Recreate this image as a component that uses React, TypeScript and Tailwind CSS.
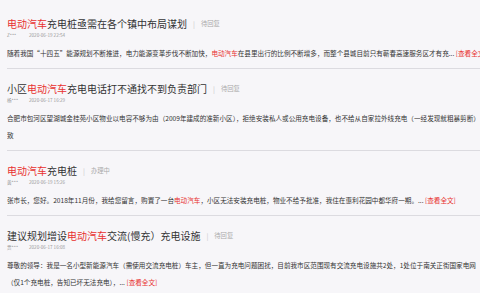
const red = 'text-[#e8312f]'

type Item = {
  pre?: string
  post: string
  status: string
  user: string
  time: string
  lines: React.ReactNode[]
}

const items: Item[] = [
  {
    post: '充电桩亟需在各个镇中布局谋划',
    status: '待回复',
    user: 'Z***',
    time: '2020-06-19 22:54',
    lines: [
      <>
        随着我国“十四五”能源规划不断推进，电力能源变革步伐不断加快，<span className={red}>电动汽车</span>
        在县里出行的比例不断增多，而整个县城目前只有蕲春高速服务区才有充... <span className={red}>[查看全文]</span>
      </>,
    ],
  },
  {
    pre: '小区',
    post: '充电电话打不通找不到负责部门',
    status: '待回复',
    user: '杨***',
    time: '2020-06-17 16:29',
    lines: [
      '合肥市包河区望湖城金桂苑小区物业以电容不够为由（2009年建成的准新小区），拒绝安装私人或公用充电设备，也不给从自家拉外线充电（一经发现就粗暴剪断）',
      '致',
    ],
  },
  {
    post: '充电桩',
    status: '办理中',
    user: '黄***',
    time: '2020-06-19 15:26',
    lines: [
      <>
        张市长，您好。2018年11月份，我给您留言，购置了一台<span className={red}>电动汽车</span>
        ，小区无法安装充电桩，物业不给予批准，我住在惠利花园中都华府一期。... <span className={red}>[查看全文]</span>
      </>,
    ],
  },
  {
    pre: '建议规划增设',
    post: '交流(慢充）充电设施',
    status: '待回复',
    user: '贾***',
    time: '2020-06-17 16:08',
    lines: [
      '尊敬的领导：我是一名小型新能源汽车（需使用交流充电桩）车主，但一直为充电问题困扰，目前我市区范围现有交流充电设施共2处，1处位于南关正街国家电网',
      <>
        （仅1个充电桩，告知已坏无法充电），... <span className={red}>[查看全文]</span>
      </>,
    ],
  },
]

export default function App() {
  return (
    <div
      className="w-[480px] h-[293px] overflow-hidden bg-[#f7f6f9] pt-[4px] pl-[7px]"
      style={{ fontFamily: '"Noto Sans CJK SC", "Microsoft YaHei", sans-serif' }}
    >
      {items.map((it, i) => (
        <div key={i} className="border-b border-[#dcdbe0] pt-[13px] pb-[6px]">
          <div className="flex items-center whitespace-nowrap leading-[14px]">
            <span className="text-[10px] text-[#333]">
              {it.pre}
              <span className={red}>电动汽车</span>
              {it.post}
            </span>
            <span className="text-[7px] text-[#c8c8c8] mx-[6px]">|</span>
            <span className="text-[6.3px] text-[#aaa]">{it.status}</span>
          </div>
          <div className="flex leading-[9px] text-[4.6px] text-[#999] whitespace-nowrap">
            <span className="w-[22px]">{it.user}</span>
            <span>{it.time}</span>
          </div>
          <div className="mt-[5px] text-[6.6px] leading-[17px] text-[#333] overflow-hidden">
            {it.lines.map((l, j) => (
              <div key={j} className="whitespace-nowrap">
                {l}
              </div>
            ))}
          </div>
        </div>
      ))}
    </div>
  )
}
